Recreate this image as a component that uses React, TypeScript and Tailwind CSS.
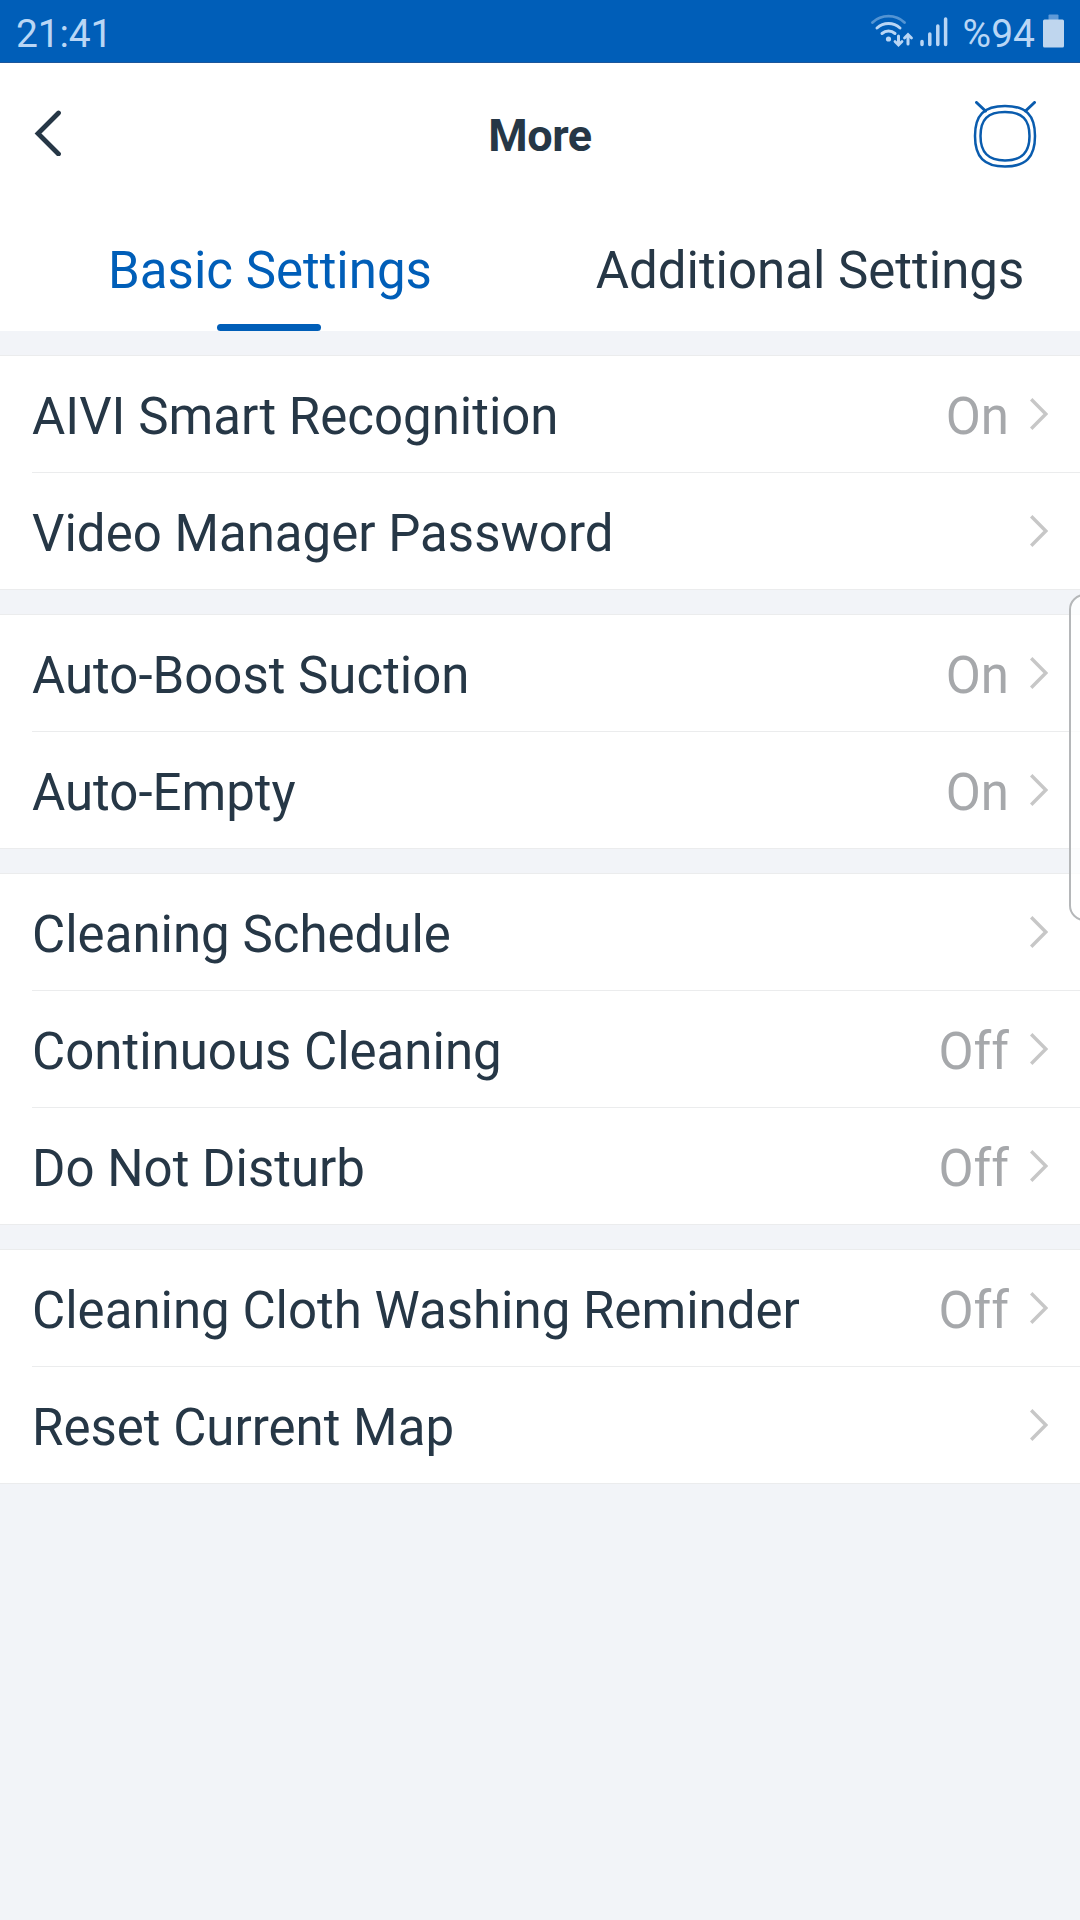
type Setting = {
  label: string;
  value?: string;
};

const tabs = ["Basic Settings", "Additional Settings"];

const groups: Setting[][] = [
  [
    { label: "AIVI Smart Recognition", value: "On" },
    { label: "Video Manager Password" },
  ],
  [
    { label: "Auto-Boost Suction", value: "On" },
    { label: "Auto-Empty", value: "On" },
  ],
  [
    { label: "Cleaning Schedule" },
    { label: "Continuous Cleaning", value: "Off" },
    { label: "Do Not Disturb", value: "Off" },
  ],
  [
    { label: "Cleaning Cloth Washing Reminder", value: "Off" },
    { label: "Reset Current Map" },
  ],
];

function StatusBar() {
  return (
    <div className="flex h-[63px] items-center justify-between border-b border-[#1c569b] bg-[#005eb8] pl-4 pr-4 text-[#b9d6f5]">
      <span className="pt-1.5 text-[39px] leading-none tracking-[-0.2px]">21:41</span>
      <div className="flex items-center">
        {/* Wi-Fi with data arrows */}
        <svg className="h-[34px] w-[44px]" viewBox="0 0 44 34" fill="none" stroke="currentColor" strokeLinecap="round">
          <path d="M1.500 8.500a23.500 23.500 0 0 1 32 0" strokeWidth="2.8" opacity="0.45" />
          <path d="M6 14a17 17 0 0 1 23 0" strokeWidth="3" />
          <path d="M11 19.500a10 10 0 0 1 13 0" strokeWidth="3" />
          <circle cx="17.500" cy="25" r="2.6" fill="currentColor" stroke="none" />
          <path d="M27.500 22v7M37 30v-7" strokeWidth="3" />
          <path d="M24 27.500l3.500 3.500l3.500-3.500M33.500 24l3.500-3.500l3.500 3.500" strokeWidth="2.8" />
        </svg>
        {/* Signal */}
        <svg className="ml-[5px] h-[34px] w-[28px]" viewBox="0 0 28 34" fill="none" stroke="currentColor" strokeWidth="3.5" strokeLinecap="round">
          <path d="M2 27.500v3M9.800 20v10.500M17.800 12v18.500M25.600 5v25.500" />
        </svg>
        <span className="ml-[15px] pt-1.5 text-[39px] leading-none">%94</span>
        <svg className="ml-2 h-[34px] w-[21px]" viewBox="0 0 21 34">
          <rect x="5.5" y="0.5" width="10" height="6" rx="1" fill="#5f9ad8" />
          <rect x="0" y="5.500" width="21" height="28" rx="1.5" fill="#bfd6ee" />
        </svg>
      </div>
    </div>
  );
}

function Header() {
  return (
    <header className="grid h-[145px] grid-cols-3 items-center pl-[34px] pr-[43px]">
      <svg className="mb-[5px] h-[46px] w-[28px]" viewBox="0 0 28 46" fill="none" stroke="#263746" strokeWidth="4.8" strokeLinecap="round">
        <path d="M24.500 3L4 23.500L24.500 44" />
      </svg>
      <h1 className="pl-[9px] text-center text-[45px] font-bold leading-none tracking-[-0.4px]">More</h1>
      <svg className="mb-0.5 h-[68px] w-[64px] justify-self-end" viewBox="0 0 64 68" fill="none" stroke="#0a5cae" strokeWidth="2.5">
        <path d="M32 5C53 5 62 14 62 35S53 65.500 32 65.500 2 56 2 35 11 5 32 5z" />
        <path d="M32 11C49.500 11 56.500 18.500 56.500 35S49 59.500 32 59.500 7.500 51.500 7.500 35 14.500 11 32 11z" />
        <path d="M3.500 1.500l9 8.500M61.500 1.500l-9 8.500" strokeWidth="3" strokeLinecap="round" />
      </svg>
    </header>
  );
}

function SettingRow({ label, value }: Setting) {
  return (
    <li className="ml-8 flex h-[117px] items-center border-b border-[#ebeced] pr-8 last:ml-0 last:pl-8">
      <span className="pt-1 text-[51px] leading-none">{label}</span>
      <span className="ml-auto mr-[21px] pt-1 text-[51px] leading-none text-[#a6a8ab]">{value}</span>
      <svg className="h-[32px] w-[18px]" viewBox="0 0 18 32" fill="none" stroke="#c7c7c7" strokeWidth="3.4">
        <path d="M1.200 1.200L15.800 16L1.200 30.800" />
      </svg>
    </li>
  );
}

export default function App() {
  return (
    <div className="relative min-h-[1920px] w-[1080px] overflow-hidden bg-[#f2f4f8] font-['Roboto',sans-serif] text-[#263746]">
      <StatusBar />
      <div className="bg-white">
        <Header />
        <nav className="grid h-[123px] grid-cols-2">
          {tabs.map((tab, i) => (
            <button
              key={tab}
              className={`flex flex-col items-center justify-between pt-[37px] text-[51px] leading-none ${
                i === 0 ? "text-[#005eb8]" : ""
              }`}
            >
              <span>{tab}</span>
              {i === 0 && <span className="mr-0.5 h-[7px] w-[104px] rounded-full bg-[#005eb8]" />}
            </button>
          ))}
        </nav>
      </div>

      <main className="flex flex-col gap-6 pt-6">
        {groups.map((group) => (
          <ul key={group[0].label} className="border-t border-[#ebeced] bg-white">
            {group.map((item) => (
              <SettingRow key={item.label} {...item} />
            ))}
          </ul>
        ))}
      </main>

      {/* Edge panel handle */}
      <div className="absolute -right-5 top-[594px] h-[327px] w-[31px] rounded-[18px] border-2 border-[#b5b7b9] bg-white/80" />
    </div>
  );
}
